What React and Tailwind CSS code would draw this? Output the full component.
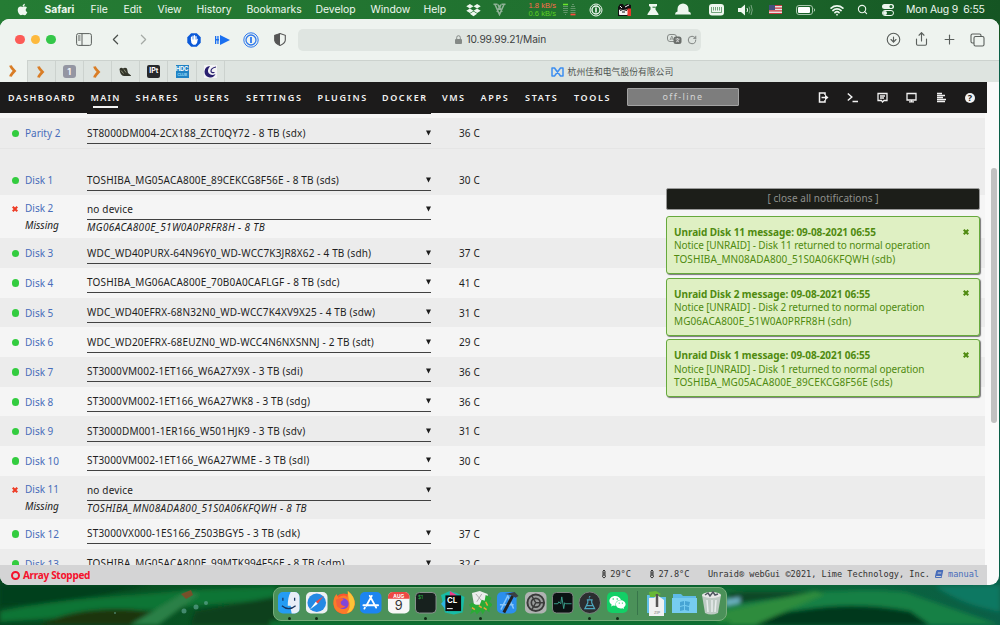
import React from 'react';
import {
  Search, RotateCw, ChevronLeft, ChevronRight, Share, Plus, CircleArrowDown, Copy, Wifi,
} from 'lucide-react';
import { FaApple, FaDropbox, FaBook, FaWeixin } from 'react-icons/fa';

const MENUS = [
  ['Safari', 'w-[46px] font-bold'],
  ['File', 'w-[33px]'],
  ['Edit', 'w-[34px]'],
  ['View', 'w-[39px]'],
  ['History', 'w-[50px]'],
  ['Bookmarks', 'w-[69px]'],
  ['Develop', 'w-[55px]'],
  ['Window', 'w-[53px]'],
  ['Help', 'w-[42px]'],
];

const NAV = [
  ['DASHBOARD', 'w-[82.5px] tracking-[1.4px]'],
  ['MAIN', 'w-[45px] tracking-[1.3px]'],
  ['SHARES', 'w-[59px] tracking-[1.7px]'],
  ['USERS', 'w-[51.5px] tracking-[1.7px]'],
  ['SETTINGS', 'w-[71.5px] tracking-[1.8px]'],
  ['PLUGINS', 'w-[64.5px] tracking-[1.6px]'],
  ['DOCKER', 'w-[60px] tracking-[1.6px]'],
  ['VMS', 'w-[38.5px] tracking-[1.5px]'],
  ['APPS', 'w-[44.5px] tracking-[1.7px]'],
  ['STATS', 'w-[49px] tracking-[1.7px]'],
  ['TOOLS', 'w-[53px] tracking-[1.6px]'],
];

const DISKS = [
  { name: 'Disk 1', device: 'TOSHIBA_MG05ACA800E_89CEKCG8F56E - 8 TB (sds)', temp: '30 C' },
  { name: 'Disk 2', missing: 'MG06ACA800E_51W0A0PRFR8H - 8 TB' },
  { name: 'Disk 3', device: 'WDC_WD40PURX-64N96Y0_WD-WCC7K3JR8X62 - 4 TB (sdh)', temp: '37 C' },
  { name: 'Disk 4', device: 'TOSHIBA_MG06ACA800E_70B0A0CAFLGF - 8 TB (sdc)', temp: '41 C' },
  { name: 'Disk 5', device: 'WDC_WD40EFRX-68N32N0_WD-WCC7K4XV9X25 - 4 TB (sdw)', temp: '31 C' },
  { name: 'Disk 6', device: 'WDC_WD20EFRX-68EUZN0_WD-WCC4N6NXSNNJ - 2 TB (sdt)', temp: '29 C' },
  { name: 'Disk 7', device: 'ST3000VM002-1ET166_W6A27X9X - 3 TB (sdi)', temp: '36 C' },
  { name: 'Disk 8', device: 'ST3000VM002-1ET166_W6A27WK8 - 3 TB (sdg)', temp: '36 C' },
  { name: 'Disk 9', device: 'ST3000DM001-1ER166_W501HJK9 - 3 TB (sdv)', temp: '31 C' },
  { name: 'Disk 10', device: 'ST3000VM002-1ET166_W6A27WME - 3 TB (sdl)', temp: '30 C' },
  { name: 'Disk 11', missing: 'TOSHIBA_MN08ADA800_51S0A06KFQWH - 8 TB' },
  { name: 'Disk 12', device: 'ST3000VX000-1ES166_Z503BGY5 - 3 TB (sdk)', temp: '37 C' },
  { name: 'Disk 13', device: 'TOSHIBA_MG05ACA800E_99MTK994F56E - 8 TB (sdm)', temp: '32 C' },
];

const NOTICES = [
  { disk: 'Disk 11', device: 'TOSHIBA_MN08ADA800_51S0A06KFQWH (sdb)' },
  { disk: 'Disk 2', device: 'MG06ACA800E_51W0A0PRFR8H (sdn)' },
  { disk: 'Disk 1', device: 'TOSHIBA_MG05ACA800E_89CEKCG8F56E (sds)' },
];

const Cross = ({ className }) => (
  <svg viewBox="0 0 8 8" className={className} fill="none" stroke="currentColor" strokeWidth="2.8">
    <path d="M1 1l6 6M7 1L1 7" />
  </svg>
);

const Wallpaper = () => (
  <svg className="absolute inset-0 w-full h-full" viewBox="0 0 1000 625" preserveAspectRatio="none">
    <defs>
      <linearGradient id="bar" x1="0" x2="1">
        <stop offset="0" stopColor="#257c34" />
        <stop offset="0.6" stopColor="#20702f" />
        <stop offset="1" stopColor="#155523" />
      </linearGradient>
      <linearGradient id="grass" x1="0" x2="1">
        <stop offset="0" stopColor="#06451f" />
        <stop offset="0.3" stopColor="#0a5c26" />
        <stop offset="0.75" stopColor="#0b6531" />
        <stop offset="1" stopColor="#0a5f48" />
      </linearGradient>
      <filter id="soft"><feGaussianBlur stdDeviation="2" /></filter>
    </defs>
    <rect width="1000" height="625" fill="url(#grass)" />
    <rect width="1000" height="40" fill="url(#bar)" />
    <g filter="url(#soft)">
      <path d="M0 585h150L60 603 0 606z" fill="#06401b" />
      <path d="M0 611C70 597 130 596 190 590l85-3v12C180 607 70 618 0 622z" fill="#107434" />
      <path d="M40 625c30-17 80-19 112-13l-12 13z" fill="#1a3511" />
      <path d="M130 625l55-33 15 2-42 31z" fill="#2a8046" />
      <path d="M195 611l85-15v29h-90z" fill="#07401f" />
      <path d="M725 590c60 8 130-4 180 2l95 33h-90c-50-16-115-21-185-7z" fill="#178044" />
      <path d="M725 592h100l-90 12z" fill="#0a4628" />
      <path d="M760 620c40-14 95-19 150-9l20 14H750z" fill="#05371f" />
      <path d="M935 586c20 15 45 22 65 26v-27z" fill="#0c7862" />
      <path d="M720 612l95-21 10 3-70 31h-40z" fill="#2f8c3d" />
      <path d="M725 600l15-3v6l-15 3z" fill="#6eb3c5" />
      <path d="M270 621h460v6H270z" fill="#117230" />
    </g>
    <path d="M181 594l10-4 2 5-7 4z" fill="#77502a" />
    <g fill="#69ad9f" opacity=".6">
      <circle cx="184" cy="611" r="2.5" /><circle cx="196" cy="607" r="2.5" />
      <circle cx="206" cy="603" r="2" /><circle cx="115" cy="613" r="1" />
    </g>
  </svg>
);

const MenuBar = () => (
  <div className="relative h-[19px] shrink-0 flex items-center text-[10.4px] text-[#eef7ef] whitespace-nowrap">
    <div className="w-[44.5px] pl-[15.5px]"><FaApple className="w-[13px] h-[13px]" /></div>
    {MENUS.map(([label, cls]) => <div key={label} className={cls}>{label}</div>)}
    <div className="w-[27px]"><FaDropbox className="w-[15px] h-[14px]" /></div>
    <div className="w-[36px]">
      <svg viewBox="0 0 13 13" className="w-[13px] h-[13px]" fill="none" stroke="#8fb296" strokeWidth="1.6">
        <path d="M.5 1.2h4M8.500 1.200h4M2 1.500l4.500 10 4.500-10M5 1.500L6.500 5 8 1.500M4 9l2.500-5L9 9" />
      </svg>
    </div>
    <div className="w-[33px] font-['Liberation_Sans'] text-[7.6px] leading-[7.2px]">
      <div className="text-[#ff6a4d]">1.8 kB/s</div>
      <div className="text-[#5bd021]">0.6 kB/s</div>
    </div>
    <svg viewBox="0 0 14 13" className="w-[14px] h-[13px] mr-[13px]" strokeWidth="1" fill="none">
      <path d="M1 3.500h5M1 5.500h5M1 7.500h5M1.500 9.500h4M3 11.500h1M10 1.500h2M9 3.500h4M8.500 5.500h5M8.500 7.500h5M8.500 9.500h5" stroke="#62966a" />
      <path d="M1 1.500h5" stroke="#6ae52d" strokeWidth="1.5" />
      <path d="M8.500 11.500h5" stroke="#ff4a3d" strokeWidth="1.7" />
    </svg>
    <svg viewBox="0 0 14 14" className="w-[14px] h-[14px] mr-[14px]" fill="none" stroke="#eef7ef">
      <circle cx="7" cy="7" r="6" /><circle cx="7" cy="7" r="4" strokeWidth="1.4" /><path d="M7 4.500v5" strokeWidth="1.6" />
    </svg>
    <svg viewBox="0 0 16 14" className="w-[16px] h-[14px] mr-[14px]">
      <path d="M1 4l2-3h3l1 2 3-2 4 1v11H1z" fill="#111" />
      <path d="M2.500 7h8v4.500h-8zM3 3l2 2M8 4l4-2" fill="#f4f4f4" stroke="#f4f4f4" />
      <path d="M3 7.500l3-1 4 1M5 9h3M8 6l4-3" stroke="#111" fill="none" /><path d="M10.500 5.500h3.500V13h-3.500z" fill="#e9372c" />
    </svg>
    <svg viewBox="0 0 12 13" className="w-[12px] h-[13px] mr-[16px]" fill="#eef7ef">
      <path d="M2 1h8v2L8.500 4v2.500L11.500 11v1H.5v-1L3.500 6.500V4L2 3z" /><path d="M5.500 4.200h3" stroke="#20702f" />
    </svg>
    <svg viewBox="0 0 16 13" className="w-[16px] h-[13px] mr-[18px]" fill="#eef7ef">
      <path d="M2.500 8.500V6a5.500 5.500 0 0111 0v2.500Q16 9 16 11.500H0Q0 9 2.500 8.500z" />
    </svg>
    <svg viewBox="0 0 15 12" className="w-[15px] h-[12px] mr-[14px]">
      <rect width="15" height="11.500" rx="3" fill="#eef7ef" />
      <path d="M2.500 3v5.500M4.500 3v3.500M6.500 3v3.500M8.500 3v3.500M10.500 3v3.500M12.500 3v5.500M2.500 8.500h10" stroke="#20702f" strokeWidth=".6" fill="none" />
    </svg>
    <svg viewBox="0 0 15 12" className="w-[15px] h-[12px] mr-[16px]" fill="none" stroke="#eef7ef">
      <path d="M0 4h3l4-3.500v11L3 8H0z" fill="#eef7ef" stroke="none" />
      <path d="M9 4q1.200 2 0 4" /><path d="M11 2.500q2 3.500 0 7M13 1q2.500 5 0 10" opacity=".45" />
    </svg>
    <svg viewBox="0 0 13 9" className="w-[13px] h-[9px] mr-[14px]">
      <rect width="13" height="9" fill="#e8e1e1" />
      <path d="M0 .5h13M0 3.200h13M0 5.800h13M0 8.500h13" stroke="#c83a40" strokeWidth="1.2" />
      <rect width="6" height="5" fill="#44517e" />
    </svg>
    <svg viewBox="0 0 20 10" className="w-[20px] h-[10px] mr-[14px]">
      <rect x=".5" y=".5" width="16" height="9" rx="2.500" fill="none" stroke="#a8c7ad" />
      <rect x="2" y="2" width="12" height="6" rx="1" fill="#fff" /><path d="M18 3.500q1.500 1.500 0 3" stroke="#a8c7ad" fill="none" />
    </svg>
    <Wifi className="w-[14px] h-[14px] mr-[13px]" strokeWidth={3} />
    <Search className="w-[11px] h-[11px] mr-[14px]" strokeWidth={2.4} />
    <svg viewBox="0 0 12 12" className="w-[12px] h-[12px] mr-[12.5px]">
      <rect width="12" height="5" rx="2.500" fill="#eef7ef" /><circle cx="9" cy="2.500" r="1.500" fill="#1b642a" />
      <rect x=".5" y="6.500" width="11" height="5" rx="2.500" fill="none" stroke="#eef7ef" /><circle cx="3" cy="9" r="2" fill="#eef7ef" />
    </svg>
    <span className="whitespace-pre tracking-[-0.2px]">Mon Aug 9  6:55</span>
  </div>
);

const Toolbar = () => (
  <div className="h-[41px] shrink-0 flex items-center bg-[#eef3ef] text-[#4b504d]">
    <div className="flex gap-[6.2px] pl-[15px] w-[76px]">
      <i className="w-[9.500px] h-[9.500px] rounded-full bg-[#fc5b57]" />
      <i className="w-[9.500px] h-[9.500px] rounded-full bg-[#fdb93d]" />
      <i className="w-[9.500px] h-[9.500px] rounded-full bg-[#34c749]" />
    </div>
    <svg viewBox="0 0 16 13" className="w-[16px] h-[13px] mr-[15px]" fill="none" stroke="#5a5f5c">
      <rect x=".6" y=".6" width="14.800" height="11.800" rx="1.800" /><path d="M6 .5v12M2 3h2.500M2 5h2.500M2 7h2.500" />
    </svg>
    <ChevronLeft className="w-[17px] h-[17px] mr-[10.5px]" strokeWidth={1.7} />
    <ChevronRight className="w-[17px] h-[17px] mr-[34px] text-[#a5aaa6]" strokeWidth={1.7} />
    <svg viewBox="0 0 14 14" className="w-[14px] h-[14px] mr-[14px] ml-[1px]">
      <path d="M4.200.3h5.600l3.900 3.900v5.600l-3.900 3.900H4.200L.3 9.800V4.200z" fill="#0b59d8" />
      <path d="M4.500 7V4M6 7V3M7.500 7V2.500M9 7V3.500" stroke="#fff" strokeWidth="1.200" strokeLinecap="round" />
      <path d="M3.900 6.500h5.700l1.400-1-1 4.500-1.500 1.700H6.200L4.400 10z" fill="#fff" />
    </svg>
    <svg viewBox="0 0 15 10" className="w-[15px] h-[10px] mr-[13px]" fill="#1a6ff0">
      <path d="M5 0l10 5-10 5zM0 1h1.300v8H0zM2.300 1h1.300v8H2.300zM0 4h4v1.500H0z" />
    </svg>
    <svg viewBox="0 0 16 16" className="w-[16px] h-[16px] mr-[15px]" fill="none" stroke="#2e78ed">
      <circle cx="8" cy="8" r="7.200" /><circle cx="8" cy="8" r="5" strokeWidth="1.300" /><path d="M8 5v6" strokeWidth="1.800" />
    </svg>
    <svg viewBox="0 0 12 13" className="w-[12px] h-[13px] mr-[12px]">
      <path d="M6 .6l5.300 1.700v5Q11 10.500 6 12.400 1 10.500.7 7.300v-5z" fill="#eef3ef" stroke="#555" strokeWidth="1.100" />
      <path d="M6 .6L.7 2.300v5Q1 10.500 6 12.400z" fill="#555" />
    </svg>
    <div className="w-[403px] h-[22px] rounded-[5px] bg-[#dfe5e1] flex items-center text-[10.2px] text-[#3c403e]">
      <div className="w-[369px] flex items-center pl-[157px]">
        <svg viewBox="0 0 7 9" className="w-[7px] h-[9px] mr-[5px]">
          <rect y="4" width="7" height="5" rx="1" fill="#858a87" />
          <path d="M1.700 4V2.500a1.800 1.800 0 013.600 0V4" fill="none" stroke="#858a87" />
        </svg>
        <span className="tracking-[-0.1px]">10.99.99.21/Main</span>
      </div>
      <svg viewBox="0 0 15 11" className="w-[15px] h-[11px] mr-[5px]">
        <rect x=".5" y=".5" width="9" height="7" rx="2.500" fill="none" stroke="#858a87" />
        <path d="M3 6l1.800-4L6.500 6M3.500 5h2.500" stroke="#858a87" fill="none" strokeWidth=".8" />
        <rect x="6.500" y="2.500" width="8" height="7.500" rx="2.500" fill="#6a6e6b" />
        <path d="M8.500 5h4M10.500 4v1M9 8q2.500-1 3-3M9.500 6l2.500 2" stroke="#eee" strokeWidth=".7" fill="none" />
      </svg>
      <RotateCw className="w-[10px] h-[10px] text-[#777c79]" strokeWidth={2.200} />
    </div>
    <div className="flex-1 flex items-center justify-end pr-[14px] gap-[13.5px] text-[#5a5f5c]">
      <CircleArrowDown className="w-[15px] h-[15px]" strokeWidth={1.800} />
      <Share className="w-[15px] h-[16px] -mt-[2px]" strokeWidth={1.800} />
      <Plus className="w-[15px] h-[15px] -ml-[1px]" strokeWidth={1.800} />
      <svg viewBox="0 0 15 14" className="w-[15px] h-[14px]" fill="none" stroke="#5a5f5c" strokeWidth="1.1">
        <rect x="4" y="3.500" width="10" height="9.500" rx="1.500" />
        <path d="M4 10H2.500Q1 10 1 8.500v-6Q1 1 2.500 1h7Q11 1 11 2.500v1" />
      </svg>
    </div>
  </div>
);

const Arrow = () => (
  <svg viewBox="0 0 8 12" className="w-[8px] h-[12px]" fill="none" stroke="#d97d26" strokeWidth="2.700">
    <path d="M1.500.5Q2 2.500 5.500 6 2 9.500 1.500 11.500" />
  </svg>
);

const TABS = [
  <Arrow />,
  <Arrow />,
  <span className="w-[13px] h-[13px] rounded-[3px] bg-[#9496a2] text-[#f2f2f4] text-[9px] font-bold flex items-center justify-center">1</span>,
  <Arrow />,
  <svg viewBox="0 0 13 10" className="w-[13px] h-[10px]">
    <path d="M.5 2Q2 0 4 1.500 6 0 8 1.500L9 6l3 2.500V9H5Q1 8.500.5 2z" fill="#34362a" />
    <path d="M2 3.500l2.500 3M5 2.500l2 3" stroke="#8d9178" />
  </svg>,
  <span className="w-[13px] h-[13px] rounded-[2px] bg-[#27292b] text-white text-[7px] font-bold flex items-center justify-center">IPt</span>,
  <span className="w-[13px] h-[13px] bg-[#2083c4] text-white text-[6px] leading-[7px] font-bold text-center tracking-[-0.3px]">
    HDC<span className="block text-[4px] leading-[5px] text-[#8cd0ef]">CLUB</span>
  </span>,
  <svg viewBox="0 0 13 13" className="w-[13px] h-[13px]">
    <rect width="13" height="13" fill="#f3f3f5" />
    <path d="M6 1A5.700 5.700 0 1011.500 9Q7.500 11 5 8.500T6 1z" fill="#29206f" />
    <path d="M12 2Q7 3 7 6q0 2 3.500 1.500" stroke="#29206f" fill="none" strokeWidth="1.200" />
  </svg>,
];

const TabBar = () => (
  <div className="h-[22px] shrink-0 flex bg-[#dee4e0] border-t border-[#ccd2ce]">
    {TABS.map((icon, i) => (
      <div
        key={i}
        className={`shrink-0 flex items-center justify-center border-r border-[#ccd2ce] ${i === 0 ? 'w-[27.500px] bg-[#eef3ef] -mt-px' : 'w-[28.200px]'}`}
      >
        {icon}
      </div>
    ))}
    <div className="flex-1 flex items-center justify-center text-[8.800px] text-[#4d524f]">
      <svg viewBox="0 0 13 10" className="w-[13px] h-[10px] mr-[4px]" fill="none" stroke="#3d8ef0" strokeWidth="1.500">
        <path d="M3.500 1H1v8h2.500l6-8H12v8H9.500z M3.500 1L6 4.500" strokeLinejoin="round" />
      </svg>
      杭州佳和电气股份有限公司
    </div>
  </div>
);

const NavBar = () => (
  <div className="h-[31px] w-[987px] shrink-0 bg-[#1c1b1b] flex items-center pl-[8px] text-[9px] text-[#f2f2f2] font-semibold whitespace-nowrap">
    {NAV.map(([label, cls]) => (
      <div key={label} className={`${cls} h-full flex flex-col items-start pt-[9px] leading-[13px]`}>
        {label}
        {label === 'MAIN' && <i className="block w-[25px] h-[2px] mt-[2px] ml-[2px] bg-[#f2f2f2]" />}
      </div>
    ))}
    <div className="w-[112px] h-[18px] -mt-px bg-[#7d7d7d] border border-[#a3a3a3] rounded-[1px] text-[#d4d4d4] font-normal tracking-[1.400px] flex items-center justify-center">
      off-line
    </div>
    <div className="ml-auto flex items-center gap-[18.500px] pr-[12px]">
      <svg viewBox="0 0 11 11" className="w-[11px] h-[11px]" fill="none" stroke="#f2f2f2" strokeWidth="1.500">
        <path d="M7 3V1H1.500v9H7V8M3.500 5.500H8" /><path d="M7 2.500l3.500 3L7 8.500z" fill="#f2f2f2" stroke="none" />
      </svg>
      <svg viewBox="0 0 11 11" className="w-[11px] h-[11px]" fill="none" stroke="#f2f2f2" strokeWidth="1.500">
        <path d="M.8 1.500l4 3.500-4 3.500M5.500 9.500H11" />
      </svg>
      <svg viewBox="0 0 11 11" className="w-[11px] h-[11px]" fill="none" stroke="#f2f2f2" strokeWidth="1.300">
        <path d="M1 1.500h9v7H7L5.500 10 4.500 8.500H1zM3 4h5M3 6h4" />
      </svg>
      <svg viewBox="0 0 11 11" className="w-[11px] h-[11px]" fill="none" stroke="#f2f2f2" strokeWidth="1.300">
        <path d="M1 1.500h9v6.500H1zM3 9.800h5M5.500 8v2" />
      </svg>
      <svg viewBox="0 0 11 11" className="w-[11px] h-[11px]" fill="none" stroke="#f2f2f2" strokeWidth="1.300">
        <path d="M1 1.500h5M1 3.500h8M1 5.500h6M1 7.500h9M1 9.500h8" />
      </svg>
      <span className="w-[10px] h-[10px] rounded-full bg-[#f2f2f2] text-[#1c1b1b] text-[9px] leading-[10px] font-bold text-center">?</span>
    </div>
  </div>
);

const Select = ({ children, className }) => (
  <div className={`w-[344px] flex justify-between border-b border-[#414141] ${className}`}>
    <span className="tracking-[0.17px]">{children}</span>
    <svg viewBox="0 0 6 6" className="w-[5px] h-[6px] mt-[4px]" fill="#1c1c1c"><path d="M0 0h6L3 6z" /></svg>
  </div>
);

const DiskRow = ({ disk, shade }) => {
  const bg = shade ? 'bg-[#ececec]' : 'bg-[#f5f5f5]';
  if (disk.missing) {
    return (
      <div className={`h-[43.300px] shrink-0 flex ${bg}`}>
        <Cross className="w-[6px] h-[6px] ml-[12px] mt-[11px] text-[#ee3b24]" />
        <div className="ml-[7px] w-[62px] pt-[6px] leading-[15px]">
          <div className="text-[#486dba]">{disk.name}</div>
          <div className="italic mt-[2px]">Missing</div>
        </div>
        <div className="pt-[7.500px] leading-[14px]">
          <Select className="h-[18px]">no device</Select>
          <div className="italic leading-[14px] tracking-[0.370px]">{disk.missing}</div>
        </div>
      </div>
    );
  }
  return (
    <div className={`h-[29.700px] shrink-0 flex ${bg}`}>
      <i className="w-[7.500px] h-[7.500px] rounded-full bg-[#33cc3f] ml-[11.500px] mt-[11.500px]" />
      <div className="ml-[6px] w-[62px] pt-[8px] leading-[14px] text-[#486dba]">{disk.name}</div>
      <Select className="h-[25.500px] pt-[7.500px] leading-[14px]">{disk.device}</Select>
      <div className="ml-[28px] pt-[8px] leading-[14px] tracking-[0.150px]">{disk.temp}</div>
    </div>
  );
};

const Notices = () => (
  <div className="absolute left-[666px] top-[75px] w-[314px] text-[10px] leading-[13.400px] text-[#4f8a10]">
    <div className="h-[22px] mb-[6px] border border-[#999] rounded-[2px] bg-[#1c1e19] text-[#8f908c] flex items-center justify-center tracking-[0.050px]">
      [ close all notifications ]
    </div>
    {NOTICES.map((n) => (
      <div
        key={n.disk}
        className="relative h-[58px] mb-[3.700px] pl-[7px] pt-[9px] rounded-[3px] border border-[#66a93c] bg-[#dff0c3] shadow-[1px_1px_1px_#777] whitespace-nowrap"
      >
        <div className="font-bold tracking-[-0.060px]">Unraid {n.disk} message: 09-08-2021 06:55</div>
        <div className="tracking-[-0.100px]">Notice [UNRAID] - {n.disk} returned to normal operation</div>
        <div className="tracking-[0.080px]">{n.device}</div>
        <Cross className="absolute right-[10px] top-[11.500px] w-[6px] h-[6px]" />
      </div>
    ))}
  </div>
);

const Thermometer = () => (
  <svg viewBox="0 0 6 10" className="w-[6px] h-[10px] mr-[3.500px]" fill="none" stroke="#333">
    <path d="M2 6V2q1-2 2 0v4q1.500 2-1 3-2.500-1-1-3zM3 3v4" />
  </svg>
);

const Footer = () => (
  <div className="h-[20px] w-[987px] shrink-0 relative bg-[#d4d4d5] flex items-center pl-[11px] pr-[8px] whitespace-pre">
    <svg viewBox="0 0 9 9" className="w-[9px] h-[9px] mr-[3px]" fill="none" stroke="#f5112c" strokeWidth="2">
      <circle cx="4.500" cy="4.500" r="3.500" />
    </svg>
    <span className="text-[#f5112c] text-[10px] font-bold tracking-[-0.300px]">Array Stopped</span>
    <div className="ml-auto -mt-[1px] flex items-center font-['DejaVu_Sans_Mono'] text-[8.580px] text-[#333]">
      <Thermometer />29°C
      <span className="w-[18px]" />
      <Thermometer /><span>27.8°C</span>
      <span className="w-[18.500px]" />
      <span>Unraid® webGui ©2021, Lime Technology, Inc.</span>
      <FaBook className="w-[8px] h-[8px] ml-[5px] mr-[5px] -skew-x-12 text-[#486dba]" />
      <span className="text-[#486dba]">manual</span>
    </div>
  </div>
);

// name, artwork, running
const DOCK = [
  ['finder', <>
    <rect x="1" y="1" width="22" height="22" rx="5" fill="#249cf3" />
    <path d="M14 1h4a5 5 0 015 5v12a5 5 0 01-5 5h-3q-1-4-1-8h-3Q11 6 14 1z" fill="#e8eef7" />
    <path d="M6 7v3M18 7v3M5 15q7 6 14 0" stroke="#173560" strokeWidth="1.300" fill="none" />
  </>, true],
  ['safari', <>
    <rect x="1" y="1" width="22" height="22" rx="5" fill="#eef0f2" />
    <circle cx="12" cy="12" r="9.500" fill="#2489e4" />
    <path d="M19 5l-6 8-2-2z" fill="#f04a42" /><path d="M5 19l6-8 2 2z" fill="#fff" />
  </>, true],
  ['firefox', <>
    <circle cx="12" cy="13" r="10.500" fill="#f9552f" />
    <path d="M1.500 10q1-5 3-7l2 4q5-4 9-1l1-6q7 6 7 13-1 10-11 10.500Q1 22 1.500 10z" fill="#fc7b2a" />
    <path d="M16 0q8 6 7 14-2 8-8 8.500 5-5 2-14z" fill="#fdc437" />
    <circle cx="11.500" cy="13" r="5.500" fill="#8145d8" /><path d="M4 9q4-3 8-.5l-3 2.500q-1 4 5 4.500-5 4-9 0z" fill="#f5613b" />
  </>],
  ['appstore', <>
    <rect x="1" y="1" width="22" height="22" rx="5" fill="#1d85f0" />
    <path d="M13 5L7.500 15M11 5l6.500 12M4.500 14.500h15M6 17l-.5 1" stroke="#fff" strokeWidth="1.900" strokeLinecap="round" />
  </>],
  ['calendar', <>
    <rect x="1" y="1" width="22" height="22" rx="5" fill="#f7f7f7" />
    <path d="M1 8V6a5 5 0 015-5h12a5 5 0 015 5v2z" fill="#ee4944" />
    <text x="12" y="7" fontSize="5" fontWeight="bold" fill="#fff" textAnchor="middle">AUG</text>
    <text x="12" y="19.500" fontSize="13" fill="#333" textAnchor="middle">9</text>
  </>],
  ['terminal', <>
    <rect x="1.500" y="1.500" width="21" height="21" rx="4" fill="#17211e" stroke="#8b9490" />
    <text x="4" y="8" fontSize="5" fill="#25b843">$1</text>
  </>, true],
  ['clion', <>
    <path d="M0 4l9-4 7 2 8 4-2 16-9 2-9-2z" fill="#18bca6" /><path d="M9 0l7 4-7 3z" fill="#ea3f8c" />
    <path d="M0 13l7-7v16z" fill="#2eb4e4" /><rect x="4.500" y="4.500" width="16" height="16" fill="#0b0b0b" />
    <text x="6" y="12.500" fontSize="8" fontWeight="bold" fill="#fff">CL</text><path d="M6 18h6" stroke="#fff" />
  </>],
  ['dragon', <>
    <path d="M3 2l8-2 8 3 1 12-14 4z" fill="#eceded" /><path d="M7 3l6 7M13 3L8 11" stroke="#aaa" />
    <path d="M0 14l3-2 4 2 4 0 2-5 3 1 1-6 6 3-2 4 3 3-3 3v5l-4-3-3 5-2-4-4 4-2-3-5 3 2-5z" fill="#2aab36" />
    <path d="M3 17l3 2M10 15l3 2M17 11l2 4M15 17l3 2" stroke="#eea43a" strokeWidth="1.500" />
  </>, true],
  ['xcode', <>
    <rect x="1" y="1" width="20" height="22" rx="5" fill="#2c8fed" />
    <path d="M5 19L12 5l6 13M4 14h14" stroke="#88c7fb" strokeWidth="1.500" fill="none" />
    <path d="M8 22L17 5" stroke="#222" strokeWidth="3" /><path d="M9 3l10-2 4 4-3 2-5-3z" fill="#3a3e43" />
  </>],
  ['settings', <>
    <rect x="1" y="1" width="22" height="22" rx="5" fill="#b0b3b2" />
    <circle cx="12" cy="12" r="8.500" fill="#9a9d9c" stroke="#3a3a3a" strokeWidth="2" />
    <circle cx="12" cy="12" r="4.500" fill="none" stroke="#3a3a3a" strokeWidth="1.700" />
    <path d="M12 12h8M12 12L8 5M12 12l-4 7" stroke="#3a3a3a" strokeWidth="1.500" />
  </>],
  ['activity', <>
    <rect x="1.500" y="1.500" width="21" height="21" rx="4" fill="#0b1213" stroke="#848987" />
    <path d="M3 13h4l1-2 2 2 1-7 2 12 1-6 1 1h6" stroke="#3da994" strokeWidth=".9" fill="none" />
  </>],
  ['flask', <>
    <circle cx="12" cy="12" r="11" fill="#2b2e30" stroke="#7a817e" />
    <path d="M9 9h6M10 9v3l-3 6h10l-3-6V9M8.500 15h7M12 5v1M11 7h1" stroke="#4da7bf" strokeWidth="1.200" fill="none" />
  </>, true],
];

const Dock = () => (
  <div className="h-[34px] w-[454px] mx-auto mt-[2px] rounded-[8px] border border-[#79ad7d] bg-[#4b9159] relative flex items-start pt-[3px] pl-[1.500px]">
    {DOCK.map(([name, art, running]) => (
      <div key={name} className="w-[27.350px] flex flex-col items-center">
        <svg viewBox="0 0 24 24" className="w-[23.500px] h-[23.500px]">{art}</svg>
        {running && <i className="w-[3px] h-[3px] mt-[2px] rounded-full bg-[#102c16]" />}
      </div>
    ))}
    <div className="w-[27.350px] flex flex-col items-center">
      <span className="w-[21px] h-[21px] m-[1px] rounded-[5px] bg-[#13cf66] flex items-center justify-center">
        <FaWeixin className="w-[17px] h-[17px] text-white" />
      </span>
      <i className="w-[3px] h-[3px] mt-[2.500px] rounded-full bg-[#102c16]" />
    </div>
    <i className="w-px h-[24px] ml-[6.500px] mr-[7px] bg-[#37754a]" />
    <svg viewBox="0 0 24 26" className="w-[24px] h-[26px] mr-[3px]">
      <path d="M2 4h8l2 2h9v16H2z" fill="#62bfe8" /><path d="M4 1l7-1 5 3-5 3H5z" fill="#67b836" />
      <path d="M4 7h5l3-3 7 5v16H4z" fill="#f0f1f1" /><path d="M12 3v13" stroke="#555" strokeWidth="2.500" />
      <text x="9" y="23" fontSize="4" fill="#777">ZIP</text>
    </svg>
    <svg viewBox="0 0 25 22" className="w-[25px] h-[22px] mt-[1px] mr-[3.500px]">
      <path d="M1 2h8l2 2h13v16H1z" fill="#5ebbe8" /><path d="M0 6h25v15H0z" fill="#76ccf0" />
      <path d="M8 10l4-1v4l-4 1zM13 9l5 1-1 4-4-1zM8 15l4-1v4l-4 1zM13 14l4 1v4l-4-1z" fill="#46a4d4" />
    </svg>
    <svg viewBox="0 0 22 25" className="w-[22px] h-[25px]">
      <path d="M1 4h19l-3 18q-7 3-13 0z" fill="#cbd0cf" opacity=".9" />
      <ellipse cx="10.500" cy="4" rx="9.500" ry="3" fill="#e8e8e8" />
      <path d="M4 4l3-2 2 3 3-4 2 3 3-1" stroke="#4f5660" strokeWidth="1.500" fill="none" />
      <path d="M6 9l1 12M11 9v12M15 9l-1 12" stroke="#e8ecec" strokeWidth="1.500" />
    </svg>
  </div>
);

export default function App() {
  return (
    <div className="relative w-[1000px] h-[625px] overflow-hidden flex flex-col font-['Inter','Noto_Sans_CJK_SC',sans-serif]">
      <Wallpaper />
      <MenuBar />
      <div className="relative w-[999px] h-[566px] shrink-0 rounded-[9px] overflow-hidden bg-[#fafafa] flex flex-col">
        <Toolbar />
        <TabBar />
        <div className="flex-1 min-h-0 flex flex-col font-['Noto_Sans',sans-serif]">
          <NavBar />
          <div className="relative flex-1 min-h-0 flex">
            <div className="w-[985px] overflow-hidden flex flex-col bg-[#f5f5f5] text-[10px] text-[#1e1e1e] whitespace-nowrap">
              <div className="h-[5px] shrink-0 pl-[87px]"><div className="w-[344px] h-px bg-[#1c1b1b]" /></div>
              <DiskRow shade disk={{ name: 'Parity 2', device: 'ST8000DM004-2CX188_ZCT0QY72 - 8 TB (sdx)', temp: '36 C' }} />
              <div className="h-[17.500px] shrink-0 bg-[#ececec] border-t border-[#e5e5e5]" />
              {DISKS.map((d, i) => <DiskRow key={d.name} disk={d} shade={i % 2 === 0} />)}
            </div>
            <div className="flex-1 bg-[#fafafa] pl-[6px] pt-[55px]">
              <div className="w-[6px] h-[255px] rounded-full bg-[#c1c1c1]" />
            </div>
            <Notices />
          </div>
          <Footer />
        </div>
      </div>
      <Dock />
    </div>
  );
}
